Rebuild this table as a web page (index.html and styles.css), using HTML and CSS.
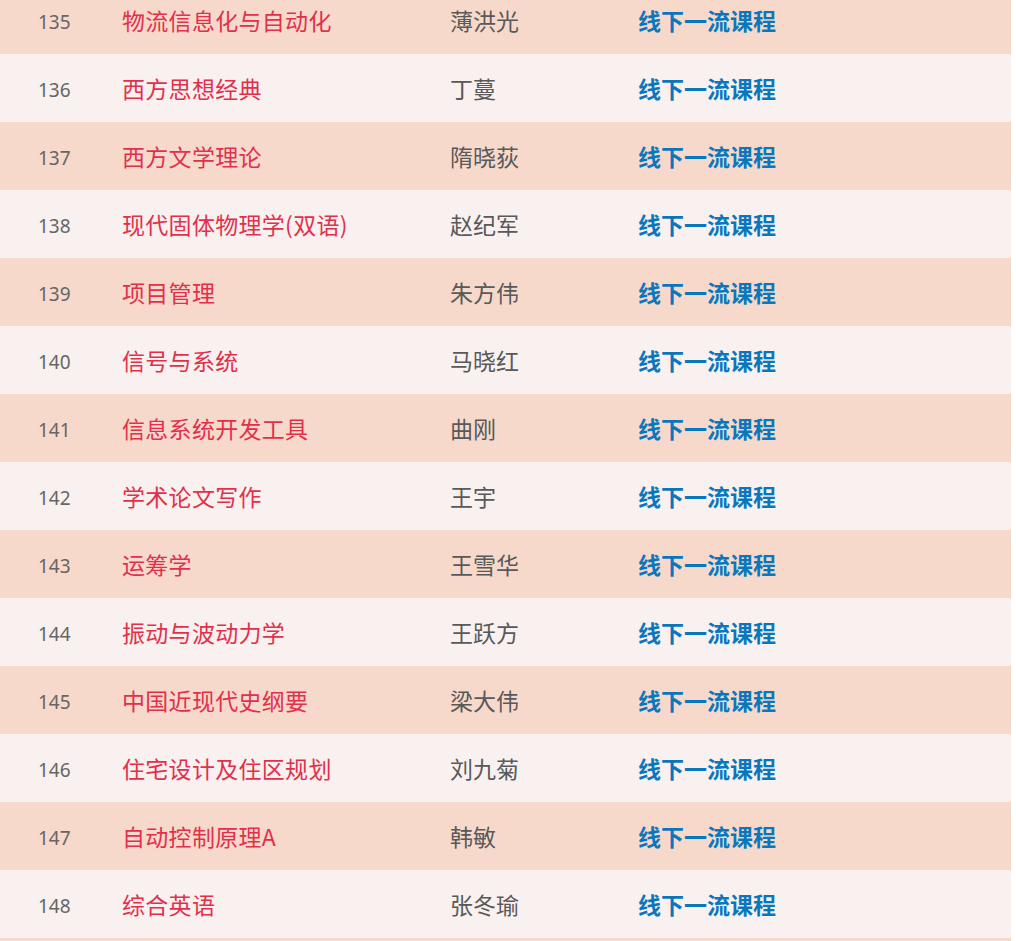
FILE: index.html
```html
<!DOCTYPE html>
<html lang="zh-CN">
<head>
<meta charset="utf-8">
<title>课程列表</title>
<link rel="stylesheet" href="styles.css">
</head>
<body>
<div class="table">
  <div class="row odd"><span class="num">135</span><span class="name">物流信息化与自动化</span><span class="teacher">薄洪光</span><span class="type">线下一流课程</span></div>
  <div class="row even"><span class="num">136</span><span class="name">西方思想经典</span><span class="teacher">丁蔓</span><span class="type">线下一流课程</span></div>
  <div class="row odd"><span class="num">137</span><span class="name">西方文学理论</span><span class="teacher">隋晓荻</span><span class="type">线下一流课程</span></div>
  <div class="row even"><span class="num">138</span><span class="name">现代固体物理学(双语)</span><span class="teacher">赵纪军</span><span class="type">线下一流课程</span></div>
  <div class="row odd"><span class="num">139</span><span class="name">项目管理</span><span class="teacher">朱方伟</span><span class="type">线下一流课程</span></div>
  <div class="row even"><span class="num">140</span><span class="name">信号与系统</span><span class="teacher">马晓红</span><span class="type">线下一流课程</span></div>
  <div class="row odd"><span class="num">141</span><span class="name">信息系统开发工具</span><span class="teacher">曲刚</span><span class="type">线下一流课程</span></div>
  <div class="row even"><span class="num">142</span><span class="name">学术论文写作</span><span class="teacher">王宇</span><span class="type">线下一流课程</span></div>
  <div class="row odd"><span class="num">143</span><span class="name">运筹学</span><span class="teacher">王雪华</span><span class="type">线下一流课程</span></div>
  <div class="row even"><span class="num">144</span><span class="name">振动与波动力学</span><span class="teacher">王跃方</span><span class="type">线下一流课程</span></div>
  <div class="row odd"><span class="num">145</span><span class="name">中国近现代史纲要</span><span class="teacher">梁大伟</span><span class="type">线下一流课程</span></div>
  <div class="row even"><span class="num">146</span><span class="name">住宅设计及住区规划</span><span class="teacher">刘九菊</span><span class="type">线下一流课程</span></div>
  <div class="row odd"><span class="num">147</span><span class="name">自动控制原理A</span><span class="teacher">韩敏</span><span class="type">线下一流课程</span></div>
  <div class="row even"><span class="num">148</span><span class="name">综合英语</span><span class="teacher">张冬瑜</span><span class="type">线下一流课程</span></div>
  <div class="row odd"><span class="num"></span><span class="name"></span><span class="teacher"></span><span class="type"></span></div>
</div>
</body>
</html>
```
FILE: styles.css
```css
html, body {
  margin: 0;
  padding: 0;
  background: #ffffff;
  overflow: hidden;
}
body {
  font-family: "Noto Sans CJK SC", "Noto Sans", sans-serif;
}
.table {
  width: 1011px;
  margin-top: -14px;
}
.row {
  display: grid;
  grid-template-columns: 84px 328px 188px 1fr;
  align-items: center;
  height: 68px;
  padding-left: 38px;
  box-sizing: border-box;
}
.odd { background: #f6d9cb; }
.even { background: #f8f1ef; }
.num {
  font-family: "Noto Sans", sans-serif;
  font-size: 19px;
  color: #666666;
  padding-top: 3px;
}
.name {
  font-size: 23px;
  color: #e2304c;
  letter-spacing: 0.3px;
}
.teacher {
  font-size: 23px;
  color: #595959;
}
.type {
  font-size: 23px;
  font-weight: bold;
  color: #0a77bd;
}
```
